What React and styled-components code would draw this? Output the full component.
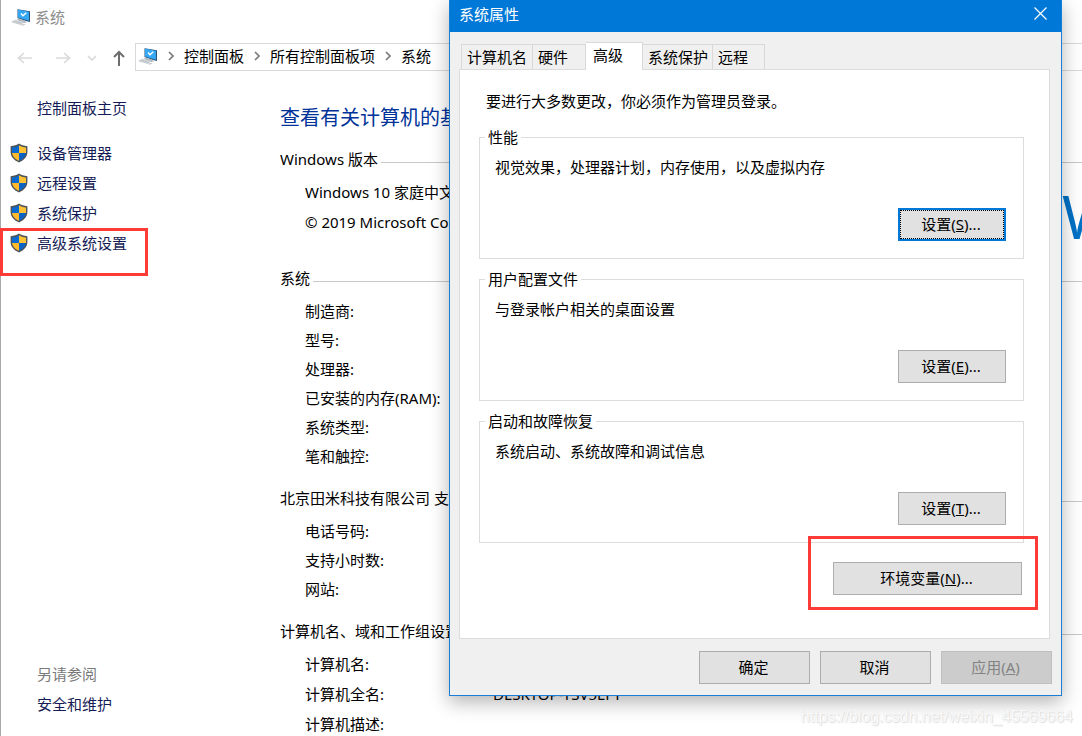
import React, { useState } from 'react';
import styled, { createGlobalStyle, css } from 'styled-components'

const GlobalStyle = createGlobalStyle`
* {
  box-sizing: border-box;
}
body {
  margin: 0;
  overflow: hidden;
  color: #000;
  background: #fff;
  font: 15px/20px "Noto Sans", "Noto Sans CJK SC", sans-serif;
}
button {
  font: inherit;
  color: inherit;
}
h1, h2, p, dl, dd {
  margin: 0;
  font-weight: normal;
}
`

const Desktop = styled.div`
position: relative;
height: 100vh;
overflow: hidden;
`

const Window = styled.div`
display: flex;
flex-direction: column;
height: 100%;
border-left: 1px solid #a8a8a8;
`

const TitleBar = styled.header`
display: flex;
align-items: center;
gap: 4px;
height: 36px;
padding: 0 0 2px 10px;
color: #8c8c8c;
`

const Toolbar = styled.nav`
display: flex;
padding-top: 7px;
`

const NavButtons = styled.div`
display: flex;
align-items: center;
gap: 16px;
width: 134px;
padding: 2px 0 0 16px;
`

const NavButton = styled.button`
display: flex;
padding: 0;
border: none;
background: transparent;
color: ${props => props.disabled ? '#d9d9d9' : '#6d6d6d'};
`

const AddressBar = styled.div`
flex: 1;
display: flex;
align-items: center;
gap: 10px;
height: 28px;
padding: 0 0 2px 2px;
border: 1px solid #d9d9d9;
border-right: none;
white-space: nowrap;
svg {
  flex: none;
}
`

const Crumb = styled.a`
color: #000;
text-decoration: none;
`

const Body = styled.div`
flex: 1;
display: flex;
min-height: 0;
`

const Sidebar = styled.aside`
flex: none;
display: flex;
flex-direction: column;
align-items: flex-start;
width: 279px;
padding: 22px 0 17px 9px;
`

const TaskLink = styled.a`
position: relative;
display: flex;
align-items: center;
gap: 9px;
height: 30px;
margin-left: ${props => props.$indent ? '27px' : '0'};
margin-bottom: ${props => props.$spaced ? '15px' : '0'};
color: #151c55;
text-decoration: none;
`

const SeeAlso = styled.div`
margin-top: auto;
`

const SeeAlsoTitle = styled.p`
margin-left: 27px;
line-height: 30px;
color: #7a7a7a;
`

const Content = styled.main`
flex: 1;
min-width: 0;
padding-top: 32px;
white-space: nowrap;
`

const Heading = styled.h1`
margin-bottom: 16px;
font-size: 20px;
line-height: 30px;
color: #003399;
`

const Section = styled.section`
margin-bottom: ${props => props.$wide ? '31px' : '18px'};
`

const SectionTitle = styled.h2`
display: flex;
align-items: center;
gap: 3px;
margin-bottom: 8px;
font-size: 15px;
&::after {
  content: '';
  flex: 1;
  height: 1px;
  margin-top: 6px;
  background: #c8c8c8;
}
`

const Edition = styled.div`
display: flex;
height: 60px;
padding-left: 25px;
line-height: 30px;
`

const EditionText = styled.div`
flex: none;
width: 757px;
`

const Brand = styled.div`
font-size: 60px;
line-height: 78px;
color: #0072c6;
`

const Facts = styled.dl`
display: grid;
grid-template-columns: 188px 1fr;
grid-auto-rows: ${props => props.$row || 29}px;
align-items: center;
padding-left: 25px;
`

const Highlight = styled.span`
position: absolute;
border: 3px solid #ff3b38;
pointer-events: none;
${props => props.$wide ? css`
inset: -26px -16px -15px -25px;
` : css`
inset: 0 -21px -18px -10px;
`}
`

const Dialog = styled.div`
position: absolute;
top: 0;
left: 449px;
width: 613px;
border: 1px solid #1a7fd4;
border-top: none;
background: #f0f0f0;
box-shadow: 0 6px 18px rgba(0, 0, 0, .3);
`

const DialogTitle = styled.header`
display: flex;
justify-content: space-between;
height: 32px;
padding: 4px 14px 0 9px;
color: #fff;
background: #0078d7;
`

const CloseButton = styled.button`
display: flex;
height: 18px;
align-items: center;
padding: 0;
border: none;
background: transparent;
`

const Tabs = styled.div`
display: flex;
align-items: flex-end;
padding: 10px 0 0 11px;
`

const Tab = styled.button`
height: 25px;
padding: 0 5px;
width: ${props => props.$width}px;
border: 1px solid #d9d9d9;
border-width: 1px 1px 0 0;
background: #f0f0f0;
text-align: left;
white-space: nowrap;
&:first-child {
  border-left-width: 1px;
}
&[aria-selected='true'] {
  height: 28px;
  margin-bottom: -1px;
  padding: 0 7px 3px;
  background: #fff;
  z-index: 1;
}
`

const Panel = styled.div`
margin: 0 11px 0 9px;
padding: 21px 25px 43px 19px;
border: 1px solid #dcdcdc;
background: #fff;
`

const Notice = styled.p`
margin-bottom: 16px;
padding-left: 7px;
`

const Groups = styled.div`
display: flex;
flex-direction: column;
gap: 10px;
`

const Group = styled.fieldset`
display: flex;
flex-direction: column;
margin: 0;
min-width: 0;
padding: 10px 17px 17px 5px;
border: 1px solid #dcdcdc;
legend {
  padding: 0 3px;
}
p {
  margin-bottom: 31px;
  padding-left: 10px;
}
`

const PushButton = styled.button`
position: relative;
align-self: flex-end;
width: ${props => props.$width || 111}px;
height: 33px;
padding: 0 2px 2px 0;
border: 1px solid #adadad;
background: #e1e1e1;
${props => props.$focused && css`
border: 2px solid #0078d7;
&::after {
  content: '';
  position: absolute;
  inset: 0;
  border: 1px dotted #000;
}
`}
&:disabled {
  color: #838383;
  border-color: #bfbfbf;
  background: #ccc;
}
`

const EnvRow = styled.div`
display: flex;
justify-content: flex-end;
padding: 19px 2px 0 0;
`

const Marked = styled.div`
position: relative;
display: flex;
`

const Footer = styled.footer`
display: flex;
justify-content: flex-end;
gap: 10px;
padding: 12px 9px 11px;
`

const Watermark = styled.div`
position: absolute;
right: 9px;
bottom: 9px;
font-family: "Liberation Sans", sans-serif;
font-size: 16px;
color: #fafafa;
text-shadow: 1px 1px 1px #ddd, 0 0 1px #ddd;
`

const ComputerIcon = () => (
  <svg width="20" height="18" viewBox="0 0 20 18">
    <path d="M6.5 1.2 19 3.200V14l-4-1-8.500-3z" fill="#2a4f73" />
    <path d="M7 1.500 18 3.800V12.800L7 9.400z" fill="#35a8f5" />
    <path d="m10 5.500 2 2.200 3.300-3" fill="none" stroke="#fff" strokeWidth="1.500" />
    <path d="m7 10.500 6 1.800 3 2.200-3.500.5L6 12z" fill="#aeb6bd" />
    <path d="m0 13.500 4.500-1.800 8.500 2.300-3.500 2.500z" fill="#d3d7da" />
    <path d="m1 14 9 2.500M3 13l8.500 2.500" stroke="#b4babf" strokeWidth=".7" />
    <path d="m9.500 16.700 3.500-1 1.500.8-3 1.200z" fill="#c2c8cc" />
  </svg>
)

const ShieldIcon = () => (
  <svg width="18" height="20" viewBox="0 0 18 20">
    <path d="M9 .6C11 2 14 3 17.400 3.200V9c0 5-3.800 8.500-8.400 10.400C4.400 17.500.6 14 .6 9V3.200C4 3 7 2 9 .6z" fill="#4d5357" />
    <path d="M9 2.300V10H2V4.500C5 4.200 7.300 3.400 9 2.300z" fill="#0a6ad0" />
    <path d="M9 2.300V10h7V4.500C13 4.200 10.700 3.400 9 2.300z" fill="#ffc233" />
    <path d="M9 10v7.800C5.500 16.300 2.500 13.700 2 10z" fill="#ffb92b" />
    <path d="M9 10v7.800c3.500-1.500 6.500-4.100 7-7.800z" fill="#0a62c4" />
  </svg>
)

const Arrow = ({ d, width = 16, height = 16, weight = 1.6 }) => (
  <svg width={width} height={height} viewBox={`0 0 ${width} ${height}`} fill="none" stroke="currentColor" strokeWidth={weight}>
    <path d={d} />
  </svg>
)

const Separator = () => (
  <svg width="6" height="10" viewBox="0 0 6 10" fill="none" stroke="#7a7a7a" strokeWidth="1.700">
    <path d="m1 1 4 4-4 4" />
  </svg>
)

const tasks = ['设备管理器', '远程设置', '系统保护', '高级系统设置']

const tabs = [
  { label: '计算机名', width: 72 },
  { label: '硬件', width: 53 },
  { label: '高级', width: 57 },
  { label: '系统保护', width: 70 },
  { label: '远程', width: 52 },
]

const groups = [
  { title: '性能', text: '视觉效果，处理器计划，内存使用，以及虚拟内存', hotkey: 'S' },
  { title: '用户配置文件', text: '与登录帐户相关的桌面设置', hotkey: 'E' },
  { title: '启动和故障恢复', text: '系统启动、系统故障和调试信息', hotkey: 'T' },
]

const FactList = ({ rows, row }) => (
  <Facts $row={row}>
    {rows.map(([label, value]) => (
      <React.Fragment key={label}>
        <dt>{label}:</dt>
        <dd>{value}</dd>
      </React.Fragment>
    ))}
  </Facts>
)

function SystemWindow() {
  return (
    <Window>
      <TitleBar><ComputerIcon />系统</TitleBar>
      <Toolbar>
        <NavButtons>
          <NavButton disabled aria-label="后退"><Arrow d="M7 3 1.500 8 7 13M1.500 8H15" /></NavButton>
          <NavButton disabled aria-label="前进"><Arrow width={22} d="m15 3 5.500 5-5.500 5M20.500 8H7" /></NavButton>
          <NavButton disabled aria-label="最近"><Arrow width={10} height={6} d="m1 1 4 4 4-4" /></NavButton>
          <NavButton aria-label="向上"><Arrow width={12} weight={2} d="M1 7 6 2l5 5M6 2v14" /></NavButton>
        </NavButtons>
        <AddressBar>
          <ComputerIcon />
          <Separator />
          <Crumb href="#panel">控制面板</Crumb>
          <Separator />
          <Crumb href="#all">所有控制面板项</Crumb>
          <Separator />
          <Crumb href="#system">系统</Crumb>
        </AddressBar>
      </Toolbar>
      <Body>
        <Sidebar>
          <TaskLink href="#home" $indent $spaced>控制面板主页</TaskLink>
          {tasks.map((task, i) => (
            <TaskLink href="#task" key={task}>
              <ShieldIcon />
              {task}
              {i === tasks.length - 1 && <Highlight />}
            </TaskLink>
          ))}
          <SeeAlso>
            <SeeAlsoTitle>另请参阅</SeeAlsoTitle>
            <TaskLink href="#security" $indent>安全和维护</TaskLink>
          </SeeAlso>
        </Sidebar>
        <Content>
          <Heading>查看有关计算机的基本信息</Heading>
          <Section $wide>
            <SectionTitle>Windows 版本</SectionTitle>
            <Edition>
              <EditionText>
                <p>Windows 10 家庭中文版</p>
                <p>© 2019 Microsoft Corporation。保留所有权利。</p>
              </EditionText>
              <Brand>Windows 10</Brand>
            </Edition>
          </Section>
          <Section>
            <SectionTitle>系统</SectionTitle>
            <FactList rows={[['制造商'], ['型号'], ['处理器'], ['已安装的内存(RAM)'], ['系统类型'], ['笔和触控']]} />
          </Section>
          <Section>
            <SectionTitle>北京田米科技有限公司 支持</SectionTitle>
            <FactList rows={[['电话号码'], ['支持小时数'], ['网站']]} />
          </Section>
          <Section>
            <SectionTitle>计算机名、域和工作组设置</SectionTitle>
            <FactList row={30} rows={[['计算机名'], ['计算机全名', 'DESKTOP-TSV5EFT'], ['计算机描述']]} />
          </Section>
        </Content>
      </Body>
    </Window>
  )
}

function PropertiesDialog() {
  const [active, setActive] = useState('高级')
  return (
    <Dialog role="dialog" aria-label="系统属性">
      <DialogTitle>
        系统属性
        <CloseButton aria-label="关闭">
          <svg width="13" height="13" viewBox="0 0 13 13" stroke="#fff" strokeWidth="1.200">
            <path d="m.5.500 12 12m0-12-12 12" />
          </svg>
        </CloseButton>
      </DialogTitle>
      <Tabs role="tablist">
        {tabs.map(({ label, width }) => (
          <Tab key={label} role="tab" $width={width} aria-selected={label === active} onClick={() => setActive(label)}>
            {label}
          </Tab>
        ))}
      </Tabs>
      <Panel role="tabpanel">
        <Notice>要进行大多数更改，你必须作为管理员登录。</Notice>
        <Groups>
          {groups.map(({ title, text, hotkey }, i) => (
            <Group key={title}>
              <legend>{title}</legend>
              <p>{text}</p>
              <PushButton $width={108} $focused={i === 0}>设置(<u>{hotkey}</u>)...</PushButton>
            </Group>
          ))}
        </Groups>
        <EnvRow>
          <Marked>
            <PushButton $width={189}>环境变量(<u>N</u>)...</PushButton>
            <Highlight $wide />
          </Marked>
        </EnvRow>
      </Panel>
      <Footer>
        <PushButton>确定</PushButton>
        <PushButton>取消</PushButton>
        <PushButton disabled>应用(<u>A</u>)</PushButton>
      </Footer>
    </Dialog>
  )
}

const App = () => (
  <>
    <GlobalStyle />
    <Desktop>
      <SystemWindow />
      <PropertiesDialog />
      <Watermark>https://blog.csdn.net/weixin_45569664</Watermark>
    </Desktop>
  </>
)

export default App;
